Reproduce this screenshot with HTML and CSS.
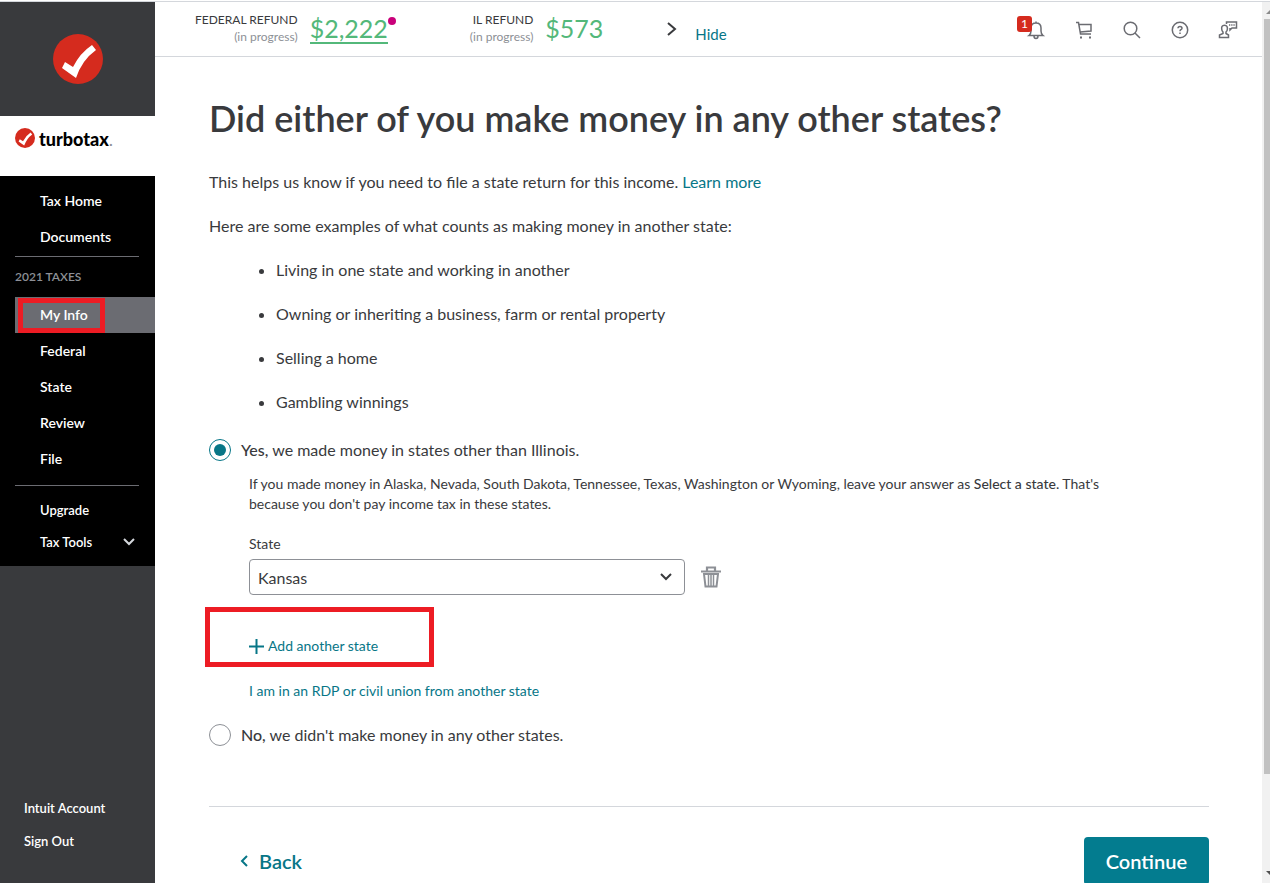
FILE: index.html
```html
<!DOCTYPE html>
<html lang="en">
<head>
    <meta charset="UTF-8">
    <meta name="viewport" content="width=device-width, initial-scale=1.0">
    <title>TurboTax - Other State Income</title>
    <link rel="stylesheet" href="styles.css">
</head>
<body>
    <div class="page">
        <aside class="sidebar">
            <div class="badge">
                <svg width="50" height="50" viewBox="0 0 50 50">
                    <circle cx="25" cy="25" r="25" fill="#d52b1e"/>
                    <path d="M9 34L12 28L20 33Q27 19 39 11L43 16Q29 26 23 44Z" fill="#fff"/>
                </svg>
            </div>
            <div class="brand">
                <svg width="20" height="20" viewBox="0 0 50 50">
                    <circle cx="25" cy="25" r="25" fill="#d52b1e"/>
                    <path d="M9 34L12 28L20 33Q27 19 39 11L43 16Q29 26 23 44Z" fill="#fff"/>
                </svg>
                <span class="brand-name">turbotax<span class="brand-dot">.</span></span>
            </div>
            <nav class="menu">
                <a href="#">Tax Home</a>
                <a href="#">Documents</a>
                <hr>
                <h2>2021 TAXES</h2>
                <a href="#" class="active">My Info<span class="mark mark-info"></span></a>
                <a href="#">Federal</a>
                <a href="#">State</a>
                <a href="#">Review</a>
                <a href="#">File</a>
                <hr class="second">
                <a href="#" class="small">Upgrade</a>
                <a href="#" class="small">Tax Tools
                    <svg width="12" height="8" viewBox="0 0 12 8" fill="none" stroke="#d4d7dc" stroke-width="2"><path d="M1 1L6 6L11 1"/></svg>
                </a>
            </nav>
            <div class="account">
                <a href="#">Intuit Account</a>
                <a href="#">Sign Out</a>
            </div>
        </aside>

        <main class="main">
            <header class="topbar">
                <div class="refund federal">
                    <div class="refund-label">FEDERAL REFUND<span>(in progress)</span></div>
                    <a href="#" class="amount linked">$2,222<span class="dot"></span></a>
                </div>
                <div class="refund">
                    <div class="refund-label">IL REFUND<span>(in progress)</span></div>
                    <div class="amount">$573</div>
                </div>
                <svg class="chevron" width="10" height="16" viewBox="0 0 10 16" fill="none" stroke="#393a3d" stroke-width="2"><path d="M1 2L8 8L1 14"/></svg>
                <a href="#" class="hide">Hide</a>
                <div class="tools">
                    <button type="button" aria-label="Notifications">
                        <svg width="20" height="20" viewBox="0 0 20 20"><path d="M3 15.500Q5 14 5 11V8Q5 3 10 3T15 8V11Q15 14 17 15.500ZM10 3V1.500M8 16Q8 18.500 10 18.500T12 16"/></svg>
                        <span class="count">1</span>
                    </button>
                    <button type="button" aria-label="Cart">
                        <svg width="20" height="20" viewBox="0 0 20 20"><path d="M2 2.500H4.500L6.500 14H17M5 4.500H17V11L6.200 12"/><path class="wheels" d="M7 16.500V18.500M16 16.500V18.500"/></svg>
                    </button>
                    <button type="button" aria-label="Search">
                        <svg width="20" height="20" viewBox="0 0 20 20"><circle cx="8.500" cy="8.500" r="6.300"/><path d="M13 13L18 18"/></svg>
                    </button>
                    <button type="button" aria-label="Help">
                        <svg width="20" height="20" viewBox="0 0 20 20"><circle cx="10" cy="10" r="7.700"/><path d="M8 8.300Q8 6.500 10 6.500T12 8.300Q12 9.300 10.800 9.700Q10 10 10 11.300M10 12.500V14"/></svg>
                    </button>
                    <button type="button" aria-label="Contact us">
                        <svg width="20" height="20" viewBox="0 0 20 20">
                            <path d="M8.500 4V2H18.500V8H14L12 10V8"/>
                            <path d="M6.500 5.200C3.900 5.200 3.500 7 3.700 9C3.800 10.500 4.500 11.500 5 12V13.500L1.500 15V17.500H10.500V15L8 13.500V12C8.700 11.500 9.300 10.500 9.400 9C9.500 7 9 5.200 6.500 5.200Z"/>
                            <path d="M11 5H12.300M13.200 5H14.500M15.400 5H16.700"/>
                        </svg>
                    </button>
                </div>
            </header>

            <form class="content">
                <h1>Did either of you make money in any other states?</h1>
                <p>This helps us know if you need to file a state return for this income. <a href="#">Learn more</a></p>
                <p>Here are some examples of what counts as making money in another state:</p>
                <ul>
                    <li>Living in one state and working in another</li>
                    <li>Owning or inheriting a business, farm or rental property</li>
                    <li>Selling a home</li>
                    <li>Gambling winnings</li>
                </ul>

                <label class="choice"><input type="radio" name="otherStates" value="yes" checked><span><b>Yes,</b> we made money in states other than Illinois.</span></label>
                <div class="details">
                    <p>If you made money in Alaska, Nevada, South Dakota, Tennessee, Texas, Washington or Wyoming, leave your answer as <b>Select a state.</b> That's because you don't pay income tax in these states.</p>
                    <label for="state">State</label>
                    <div class="state-row">
                        <select id="state" name="state">
                            <option>Select a state</option>
                            <option selected>Kansas</option>
                        </select>
                        <button type="button" class="trash" aria-label="Remove state">
                            <svg width="20" height="24" viewBox="0 0 20 24" fill="none" stroke="#8d9096">
                                <path d="M0 6.500H20M6 6V2.500H14V6" stroke-width="2.200"/>
                                <path d="M3 9L4.500 21.500H15.500L17 9Z" stroke-width="2"/>
                                <path d="M7.500 10V21M10 10V21M12.500 10V21" stroke-width="1.500"/>
                            </svg>
                        </button>
                    </div>
                    <div class="add-row">
                        <a href="#"><svg width="15" height="15" viewBox="0 0 15 15" stroke="#077687" stroke-width="2"><path d="M7.500 0V15M0 7.500H15"/></svg>Add another state</a>
                        <span class="mark mark-add"></span>
                    </div>
                    <a href="#" class="rdp">I am in an RDP or civil union from another state</a>
                </div>
                <label class="choice"><input type="radio" name="otherStates" value="no"><span><b>No,</b> we didn't make money in any other states.</span></label>

                <div class="actions">
                    <a href="#" class="back"><svg width="8" height="14" viewBox="0 0 8 14" fill="none" stroke="#077687" stroke-width="2"><path d="M7 2L2 7L7 12"/></svg>Back</a>
                    <button type="submit" class="continue">Continue</button>
                </div>
            </form>
        </main>

        <div class="scrollbar">
            <svg width="8" height="4" viewBox="0 0 8 4"><path d="M4 4L8 0V4Z" fill="#8a8a8a"/></svg>
            <div class="thumb"></div>
            <svg width="8" height="4" viewBox="0 0 8 4"><path d="M4 0H8V4Z" fill="#505050"/></svg>
        </div>
    </div>
</body>
</html>
```
FILE: styles.css
```css
* {
    box-sizing: border-box;
}
body {
    margin: 0;
    padding-top: 1px;
    height: 100vh;
    overflow: hidden;
    font-family: Lato, "Liberation Sans", sans-serif;
    font-size: 16px;
    line-height: 24px;
    color: #393a3d;
    background-color: white;
}
a {
    color: #077687;
    text-decoration: none;
}
button {
    font-family: inherit;
    border: none;
    background: none;
    padding: 0;
    cursor: pointer;
}
b {
    font-weight: 500;
}
.page {
    display: flex;
    height: 100%;
    border-top: 1px solid #d4d7dc;
}

/* Sidebar */
.sidebar {
    display: flex;
    flex-direction: column;
    flex: none;
    width: 155px;
    background-color: #393a3d;
}
.badge {
    display: flex;
    align-items: center;
    justify-content: center;
    height: 114px;
}
.brand {
    display: flex;
    gap: 4px;
    height: 60px;
    padding: 12px 15px;
    background-color: white;
}
.brand-name {
    font-size: 18px;
    font-weight: 900;
    line-height: 22px;
    color: black;
}
.brand-dot {
    color: #8d9096;
    font-weight: 400;
}
.menu {
    padding: 7px 0 8px;
    background-color: black;
}
.menu a {
    position: relative;
    display: flex;
    align-items: center;
    height: 36px;
    margin-left: 15px;
    padding-left: 25px;
    font-size: 14px;
    font-weight: 600;
    color: white;
}
.menu a.active {
    background-color: #6b6c72;
}
.menu a.small {
    justify-content: space-between;
    height: 32px;
    padding-right: 20px;
    font-size: 13px;
}
.menu hr {
    margin: 1px 16px 0 15px;
    border: none;
    border-top: 1px solid #6b6c72;
}
.menu hr.second {
    margin: 8px 16px 8px 15px;
}
.menu h2 {
    margin: 0 0 0 15px;
    font-size: 12px;
    font-weight: 600;
    line-height: 40px;
    color: #8d9096;
}
.account {
    display: flex;
    flex-direction: column;
    gap: 9px;
    margin-top: auto;
    padding: 0 24px 30px;
}
.account a {
    font-size: 13px;
    font-weight: 600;
    color: white;
}

/* Highlight boxes */
.mark {
    position: absolute;
    border: 5px solid #ed1c24;
    pointer-events: none;
}
.mark-info {
    top: 1px;
    left: 3px;
    width: 87px;
    height: 35px;
}
.mark-add {
    top: -29px;
    left: -44px;
    width: 229px;
    height: 60px;
}

/* Top bar */
.main {
    flex: 1;
    min-width: 0;
}
.topbar {
    display: flex;
    height: 55px;
    padding-left: 40px;
    border-bottom: 1px solid #d4d7dc;
}
.refund {
    display: flex;
    gap: 12px;
    padding-top: 9px;
}
.refund.federal {
    margin-right: 82px;
}
.refund-label {
    font-size: 12px;
    line-height: 17px;
    text-align: right;
}
.refund-label span {
    display: block;
    color: #8d9096;
}
.amount {
    position: relative;
    height: 33px;
    font-size: 25px;
    line-height: 34px;
    color: #53b87a;
}
.amount.linked {
    border-bottom: 2px solid #53b87a;
}
.dot {
    position: absolute;
    top: 6px;
    right: -8px;
    width: 8px;
    height: 8px;
    border-radius: 50%;
    background-color: #c9007a;
}
.chevron {
    margin: 19px 18px 0 64px;
}
.hide {
    padding-top: 20px;
    font-size: 15px;
}
.tools {
    display: flex;
    align-items: center;
    gap: 28px;
    margin-left: auto;
    padding: 2px 24px 0 0;
}
.tools button {
    position: relative;
    width: 20px;
    height: 20px;
}
.tools svg {
    display: block;
    fill: none;
    stroke: #6b6c72;
    stroke-width: 1.5;
}
.wheels {
    stroke-width: 2;
}
.count {
    position: absolute;
    top: -4px;
    left: -9px;
    width: 15px;
    height: 16px;
    border-radius: 3px;
    font-size: 12px;
    line-height: 16px;
    color: white;
    background-color: #d52b1e;
}

/* Question */
.content {
    padding: 39px 53px 0 54px;
}
.content h1 {
    margin: 0 0 30px;
    font-size: 36px;
    font-weight: 600;
    line-height: 44px;
}
.content p {
    margin: 0 0 20px;
}
.content ul {
    margin: 0 0 24px;
    padding-left: 67px;
}
.content li {
    margin-bottom: 20px;
}
.choice {
    display: flex;
    align-items: center;
    gap: 10px;
}
.choice input {
    appearance: none;
    width: 22px;
    height: 22px;
    margin: 0;
    border: 1px solid #8d9096;
    border-radius: 50%;
}
.choice input:checked {
    border-color: #077687;
    background-color: #077687;
    background-clip: content-box;
    padding: 4px;
}
.details {
    padding: 12px 64px 22px 40px;
    font-size: 14px;
    line-height: 20px;
}
.state-row {
    display: flex;
    align-items: center;
    gap: 16px;
    margin-top: 5px;
}
.state-row select {
    appearance: none;
    width: 436px;
    height: 36px;
    padding: 0 8px;
    border: 1px solid #8d9096;
    border-radius: 4px;
    font-family: inherit;
    font-size: 16px;
    color: #393a3d;
    background: url("data:image/svg+xml,%3Csvg xmlns='http://www.w3.org/2000/svg' width='12' height='8' fill='none' stroke='%23393a3d' stroke-width='2'%3E%3Cpath d='M1 1L6 6L11 1'/%3E%3C/svg%3E") no-repeat right 12px center;
}
.trash svg {
    display: block;
}
.add-row {
    position: relative;
    margin: 41px 0 25px;
}
.add-row a {
    display: flex;
    align-items: center;
    gap: 4px;
}
.rdp {
    display: block;
}
.actions {
    display: flex;
    justify-content: space-between;
    margin-top: 59px;
    padding-top: 30px;
    border-top: 1px solid #d4d7dc;
}
.back {
    display: flex;
    align-items: center;
    gap: 11px;
    padding-left: 31px;
    font-size: 20px;
    font-weight: 600;
}
.continue {
    height: 48px;
    padding: 0 22px;
    border-radius: 4px;
    font-size: 20px;
    font-weight: 600;
    color: white;
    background-color: #037c8f;
}

/* Scrollbar */
.scrollbar {
    display: flex;
    flex-direction: column;
    align-items: flex-end;
    justify-content: space-between;
    width: 8px;
    padding: 8px 0;
    background-color: #f1f1f1;
}
.thumb {
    flex: 1;
    width: 6px;
    margin: 5px 0 97px;
    background-color: #c1c1c1;
}
```
